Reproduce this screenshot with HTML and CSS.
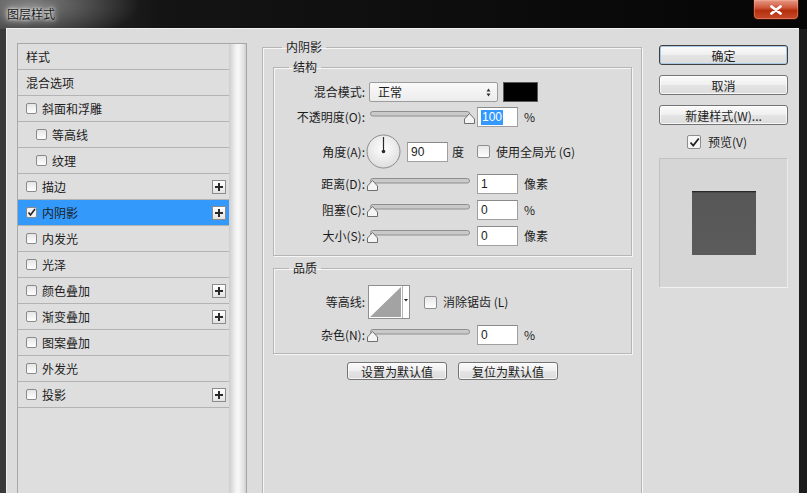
FILE: index.html
```html
<!DOCTYPE html>
<html lang="zh-CN">
<head>
<meta charset="utf-8">
<title>图层样式</title>
<link rel="stylesheet" href="styles.css">
</head>
<body>
<div class="window">
  <header class="titlebar">
    <span class="title">图层样式</span>
    <button class="close" aria-label="关闭">
      <svg width="14" height="10" viewBox="0 0 14 10"><path d="M2.5 1.5 L11.5 8.5 M11.5 1.5 L2.5 8.5" stroke="#fff" stroke-width="2.8" stroke-linecap="round"/></svg>
    </button>
  </header>
  <div class="frame">
    <div class="content">
      <div class="sidebar">
        <ul class="style-list">
          <li class="item">样式</li>
          <li class="item">混合选项</li>
          <li class="item"><span class="cb"></span>斜面和浮雕</li>
          <li class="item sub"><span class="cb"></span>等高线</li>
          <li class="item sub"><span class="cb"></span>纹理</li>
          <li class="item"><span class="cb"></span>描边<span class="plus"><svg width="8" height="8" viewBox="0 0 8 8"><path d="M4 0 V8 M0 4 H8" stroke="#2a2a2a" stroke-width="2"/></svg></span></li>
          <li class="item selected"><span class="cb checked"><svg width="9" height="9" viewBox="0 0 9 9"><path d="M1.5 4.5 L3.5 7 L8 1" stroke="#222" stroke-width="1.6" fill="none"/></svg></span>内阴影<span class="plus"><svg width="8" height="8" viewBox="0 0 8 8"><path d="M4 0 V8 M0 4 H8" stroke="#2a2a2a" stroke-width="2"/></svg></span></li>
          <li class="item"><span class="cb"></span>内发光</li>
          <li class="item"><span class="cb"></span>光泽</li>
          <li class="item"><span class="cb"></span>颜色叠加<span class="plus"><svg width="8" height="8" viewBox="0 0 8 8"><path d="M4 0 V8 M0 4 H8" stroke="#2a2a2a" stroke-width="2"/></svg></span></li>
          <li class="item"><span class="cb"></span>渐变叠加<span class="plus"><svg width="8" height="8" viewBox="0 0 8 8"><path d="M4 0 V8 M0 4 H8" stroke="#2a2a2a" stroke-width="2"/></svg></span></li>
          <li class="item"><span class="cb"></span>图案叠加</li>
          <li class="item"><span class="cb"></span>外发光</li>
          <li class="item"><span class="cb"></span>投影<span class="plus"><svg width="8" height="8" viewBox="0 0 8 8"><path d="M4 0 V8 M0 4 H8" stroke="#2a2a2a" stroke-width="2"/></svg></span></li>
        </ul>
        <div class="list-bar"></div>
      </div>

      <fieldset class="panel">
        <legend>内阴影</legend>

        <fieldset class="group structure">
          <legend>结构</legend>
          <div class="row r-blend">
            <span class="label">混合模式:</span>
            <span class="select">正常
              <svg class="spin" width="5" height="9" viewBox="0 0 5 9"><path d="M2.5 0.5 L4.5 3.5 H0.5 Z M2.5 8.5 L4.5 5.5 H0.5 Z" fill="#333"/></svg>
            </span>
            <span class="swatch"></span>
          </div>
          <div class="row r-opacity">
            <span class="label">不透明度(O):</span>
            <svg class="slider" width="110" height="13" viewBox="0 0 110 13">
              <rect x="3.5" y="0.5" width="99" height="4.5" rx="2.2" fill="#c9c9c9" stroke="#8e8e8e"/>
              <path d="M97.5 12.5 V8 L102.5 2.5 L107.5 8 V12.5 Z" fill="#f4f4f4" stroke="#6f6f6f"/>
            </svg>
            <span class="field"><span class="sel">100</span></span>
            <span class="unit">%</span>
          </div>
          <div class="row r-angle">
            <span class="label">角度(A):</span>
            <svg class="dial" width="35" height="35" viewBox="0 0 35 35">
              <defs><radialGradient id="dg" cx="50%" cy="40%" r="60%"><stop offset="0" stop-color="#ffffff"/><stop offset="1" stop-color="#dedede"/></radialGradient></defs>
              <circle cx="17.5" cy="17.5" r="16.5" fill="url(#dg)" stroke="#8c8c8c"/>
              <path d="M17.5 17.5 V3" stroke="#2a2a2a" stroke-width="1.2"/>
              <circle cx="17.5" cy="17.5" r="1.8" fill="#2a2a2a"/>
            </svg>
            <span class="field f-angle">90</span>
            <span class="unit u-deg">度</span>
            <span class="cb big"></span>
            <span class="cb-label">使用全局光 (G)</span>
          </div>
          <div class="row r-slide">
            <span class="label">距离(D):</span>
            <svg class="slider" width="110" height="13" viewBox="0 0 110 13">
              <rect x="3.5" y="0.5" width="99" height="4.5" rx="2.2" fill="#c9c9c9" stroke="#8e8e8e"/>
              <path d="M0.5 12.5 V8 L5.5 2.5 L10.5 8 V12.5 Z" fill="#f4f4f4" stroke="#6f6f6f"/>
            </svg>
            <span class="field">1</span>
            <span class="unit">像素</span>
          </div>
          <div class="row r-slide">
            <span class="label">阻塞(C):</span>
            <svg class="slider" width="110" height="13" viewBox="0 0 110 13">
              <rect x="3.5" y="0.5" width="99" height="4.5" rx="2.2" fill="#c9c9c9" stroke="#8e8e8e"/>
              <path d="M0.5 12.5 V8 L5.5 2.5 L10.5 8 V12.5 Z" fill="#f4f4f4" stroke="#6f6f6f"/>
            </svg>
            <span class="field">0</span>
            <span class="unit">%</span>
          </div>
          <div class="row r-slide">
            <span class="label">大小(S):</span>
            <svg class="slider" width="110" height="13" viewBox="0 0 110 13">
              <rect x="3.5" y="0.5" width="99" height="4.5" rx="2.2" fill="#c9c9c9" stroke="#8e8e8e"/>
              <path d="M0.5 12.5 V8 L5.5 2.5 L10.5 8 V12.5 Z" fill="#f4f4f4" stroke="#6f6f6f"/>
            </svg>
            <span class="field">0</span>
            <span class="unit">像素</span>
          </div>
        </fieldset>

        <fieldset class="group quality">
          <legend>品质</legend>
          <div class="row r-contour">
            <span class="label">等高线:</span>
            <svg class="contour" width="42" height="34" viewBox="0 0 42 34">
              <rect x="0.5" y="0.5" width="41" height="33" fill="#ffffff" stroke="#8f8f8f"/>
              <path d="M2 32 L33 2 V32 Z" fill="#a3a3a3"/>
              <path d="M34.5 1 V33" stroke="#b5b5b5"/>
              <path d="M36 14 H40 L38 16.5 Z" fill="#222"/>
            </svg>
            <span class="cb big cb-aa"></span>
            <span class="cb-label">消除锯齿 (L)</span>
          </div>
          <div class="row r-noise">
            <span class="label">杂色(N):</span>
            <svg class="slider" width="110" height="13" viewBox="0 0 110 13">
              <rect x="3.5" y="0.5" width="99" height="4.5" rx="2.2" fill="#c9c9c9" stroke="#8e8e8e"/>
              <path d="M0.5 12.5 V8 L5.5 2.5 L10.5 8 V12.5 Z" fill="#f4f4f4" stroke="#6f6f6f"/>
            </svg>
            <span class="field">0</span>
            <span class="unit">%</span>
          </div>
        </fieldset>

        <div class="defaults">
          <button class="btn small">设置为默认值</button>
          <button class="btn small">复位为默认值</button>
        </div>
      </fieldset>

      <div class="actions">
        <button class="btn big default">确定</button>
        <button class="btn big">取消</button>
        <button class="btn big">新建样式(W)...</button>
        <div class="preview-toggle">
          <span class="cb big checked-big"><svg width="11" height="11" viewBox="0 0 11 11"><path d="M1.5 5.5 L4.2 8.5 L9.8 1.5" stroke="#222" stroke-width="1.8" fill="none"/></svg></span>
          <span>预览(V)</span>
        </div>
        <div class="preview">
          <div class="preview-swatch"></div>
        </div>
      </div>
    </div>
  </div>
</div>
</body>
</html>
```

FILE: styles.css
```css
* { box-sizing: border-box; }
html, body { margin: 0; padding: 0; }
body {
  width: 807px;
  height: 493px;
  overflow: hidden;
  background: #000;
  font-family: "Noto Sans CJK SC", "Liberation Sans", sans-serif;
  font-size: 12px;
  line-height: 16px;
  color: #1c1c1c;
}

.window {
  width: 807px;
  height: 493px;
  display: flex;
  flex-direction: column;
  background: #1b1b1b;
}

/* title bar */
.titlebar {
  height: 29px;
  flex: none;
  display: flex;
  align-items: flex-start;
  justify-content: space-between;
  padding: 0 8px 0 7px;
  background:
    radial-gradient(ellipse 110px 38px at 30px 4px, rgba(150,150,150,0.75), rgba(150,150,150,0) 100%),
    linear-gradient(to right, #3a3a3a 0, #141414 160px, #050505 100%);
}
.title {
  margin-top: 6px;
  color: #1a1a1a;
  text-shadow: 0 0 3px #fff, 0 0 6px rgba(255,255,255,0.9), 0 0 10px rgba(255,255,255,0.6);
}
.close {
  width: 46px;
  height: 20px;
  margin: 0;
  padding: 0;
  border: 1px solid #3a1006;
  border-top: none;
  border-radius: 0 0 5px 5px;
  background: linear-gradient(#e59a86 0, #d0573c 40%, #b3300f 55%, #c8492a 100%);
  box-shadow: inset 0 0 0 1px rgba(255,190,170,0.35);
  display: flex;
  align-items: center;
  justify-content: center;
}

/* frame */
.frame {
  flex: 1;
  min-height: 0;
  display: flex;
  border-left: 7px solid #3a3a3a;
  border-right: 8px solid #1c1c1c;
  background: #dcdcdc;
}
.content {
  flex: 1;
  display: flex;
  align-items: flex-start;
  padding: 10px 0 0 10px;
  overflow: hidden;
  border-top: 1px solid #f0f0f0;
  border-left: 1px solid #f0f0f0;
  margin-left: -1px;
  margin-top: -1px;
}

/* left list */
.sidebar {
  display: flex;
  margin-top: 4px;
  height: 470px;
  flex: none;
}
.style-list {
  width: 212px;
  margin: 0;
  padding: 0;
  list-style: none;
  background: #dedede;
  border: 1px solid #a8a8a8;
  border-right: none;
  border-bottom: none;
}
.item {
  height: 26px;
  display: flex;
  align-items: center;
  padding: 0 3px 0 8px;
  border-bottom: 1px solid #b3b3b3;
}
.item.sub { padding-left: 18px; }
.item.selected { background: #3399fa; }
.cb {
  width: 11px;
  height: 11px;
  flex: none;
  margin-right: 5px;
  border: 1px solid #8a8a8a;
  border-radius: 2px;
  background: linear-gradient(#e6e6e6, #ffffff);
  display: flex;
  align-items: center;
  justify-content: center;
}
.cb.checked { background: #f4f4f4; }
.plus {
  margin-left: auto;
  width: 14px;
  height: 14px;
  border: 1px solid #8c8c8c;
  background: linear-gradient(#ffffff, #e2e2e2);
  display: flex;
  align-items: center;
  justify-content: center;
}
.list-bar {
  width: 18px;
  background: linear-gradient(to right, #cdcdcd 0, #f2f2f2 40%, #f8f8f8 55%, #e2e2e2 85%, #cfcfcf 100%);
  border-top: 1px solid #a8a8a8;
  border-right: 1px solid #a5a5a5;
}

/* centre panel */
fieldset {
  margin: 0;
  min-width: 0;
}
legend {
  padding: 0 4px;
  line-height: 16px;
}
.panel {
  flex: none;
  width: 380px;
  height: 470px;
  margin-left: 15px;
  padding: 0 9px 0 10px;
  border: 1px solid #b5b5b5;
  box-shadow: inset 1px 1px 0 #f6f6f6, 1px 1px 0 #f6f6f6;
}
.panel > legend { margin-left: 9px; }
.group {
  border: 1px solid #b5b5b5;
  box-shadow: inset 1px 1px 0 #f6f6f6, 1px 1px 0 #f6f6f6;
}
.group > legend { margin-left: 15px; }
.structure { margin-top: 4px; padding: 7px 0 6px 0; }
.quality { margin-top: 4px; padding: 8px 0 3px 0; }

.row {
  display: flex;
  align-items: center;
}
.r-blend { height: 20px; }
.r-opacity { height: 30px; }
.r-angle { height: 39px; }
.r-slide { height: 26px; }
.r-contour { height: 36px; }
.r-noise { height: 30px; }

.label {
  width: 91px;
  flex: none;
  text-align: right;
}
.select {
  width: 129px;
  height: 20px;
  margin-left: 4px;
  padding: 0 6px 0 8px;
  display: flex;
  align-items: center;
  justify-content: space-between;
  border: 1px solid #9c9c9c;
  border-radius: 2px;
  background: linear-gradient(#fafafa, #ececec);
}
.swatch {
  width: 35px;
  height: 20px;
  margin-left: 5px;
  background: #000;
  border: 1px solid #5a5a5a;
}
.slider { margin-left: 2px; flex: none; }
.field {
  width: 41px;
  height: 20px;
  flex: none;
  padding-left: 3px;
  display: flex;
  align-items: center;
  background: #fff;
  border: 1px solid #a0a0a0;
  border-top-color: #8a8a8a;
  font-family: "Liberation Sans", "Noto Sans CJK SC", sans-serif;
}
.sel {
  background: #3399ff;
  color: #fff;
  line-height: 15px;
  padding: 0 1px;
}
.unit { margin-left: 6px; }
.dial { margin-left: 1px; flex: none; }
.f-angle { margin-left: 6px; }
.u-deg { margin-left: 4px; }
.cb.big {
  width: 13px;
  height: 13px;
  margin-left: 13px;
  margin-right: 6px;
  border-color: #8e8e8e;
}
.contour { margin-left: 3px; flex: none; }
.cb.cb-aa { margin-left: 14px; }

.defaults {
  display: flex;
  justify-content: center;
  gap: 11px;
  margin-top: 8px;
}
.btn {
  margin: 0;
  padding: 0;
  font: inherit;
  color: #1c1c1c;
  border: 1px solid #747474;
  border-radius: 3px;
  background: linear-gradient(#fbfbfb 0, #efefef 50%, #e4e4e4 51%, #dcdcdc 100%);
  box-shadow: inset 0 0 0 1px rgba(255,255,255,0.7);
}
.btn.small { width: 100px; height: 18px; line-height: 15px; }

/* right actions */
.actions {
  flex: none;
  width: 129px;
  margin-left: 17px;
  margin-top: 6px;
  display: flex;
  flex-direction: column;
}
.btn.big { height: 20px; margin-bottom: 10px; line-height: 17px; }
.btn.default {
  border-color: #3f3f3f;
  box-shadow: inset 0 0 0 1px #a9c8e6;
}
.preview-toggle {
  display: flex;
  align-items: center;
  height: 16px;
  margin-top: -1px;
  padding-left: 15px;
}
.cb.checked-big { width: 14px; height: 14px; margin-right: 7px; background: #f6f6f6; }
.preview {
  margin-top: 8px;
  height: 130px;
  background: #d6d6d6;
  border: 1px solid #c2c2c2;
  border-bottom-color: #f2f2f2;
  border-right-color: #ececec;
  display: flex;
  align-items: center;
  justify-content: center;
}
.preview-swatch {
  width: 64px;
  height: 64px;
  background: linear-gradient(#151515 0, #3a3a3a 1px, #575757 2px, #5b5b5b 100%);
}
```
